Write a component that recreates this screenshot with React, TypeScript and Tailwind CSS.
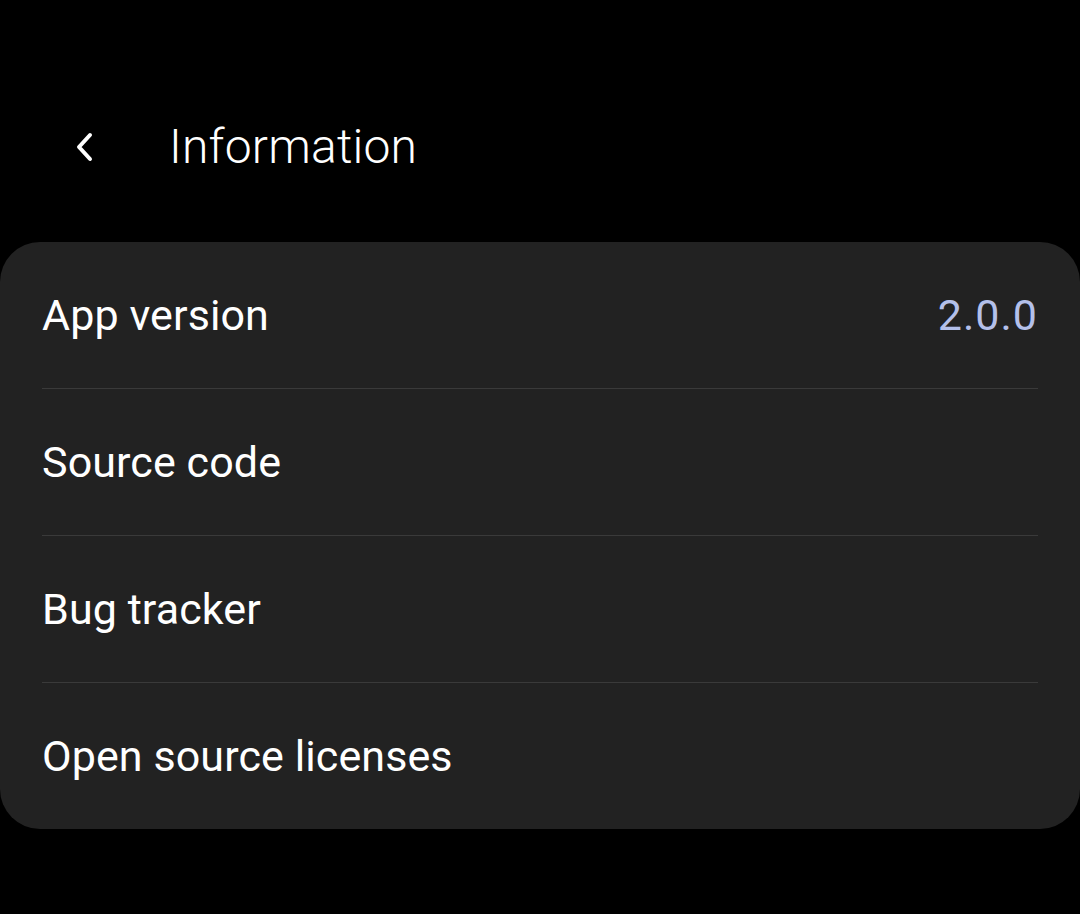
const rows = [
  { label: "App version", value: "2.0.0" },
  { label: "Source code" },
  { label: "Bug tracker" },
  { label: "Open source licenses" },
];

export default function App() {
  return (
    <div className="min-h-[914px] w-[1080px] bg-black text-white font-['Roboto',sans-serif]">
      <header className="flex items-center h-[242px] pt-[52px]">
        <button className="ml-[64px] w-[42px] h-[42px] flex items-center justify-center text-white">
          <svg width="28" height="32" viewBox="0 0 28 32" fill="none">
            <path d="M19 4 L8 16 L19 28" stroke="currentColor" strokeWidth="4" strokeLinecap="round" strokeLinejoin="round" />
          </svg>
        </button>
        <h1 className="ml-[63px] text-[48px] leading-none font-light tracking-[0.2px]">Information</h1>
      </header>

      <div className="bg-[#222222] rounded-[40px]">
        {rows.map((row, i) => (
          <div key={row.label} className="mx-[42px]">
            {i > 0 && <div className="h-px bg-[#3a3a3a]" />}
            <div className="flex items-center justify-between h-[146px]">
              <span className="text-[43px] leading-none tracking-[0.1px]">{row.label}</span>
              {row.value && (
                <span className="text-[43px] leading-none tracking-[1px] text-[#b4c0ea]">{row.value}</span>
              )}
            </div>
          </div>
        ))}
      </div>
    </div>
  );
}
